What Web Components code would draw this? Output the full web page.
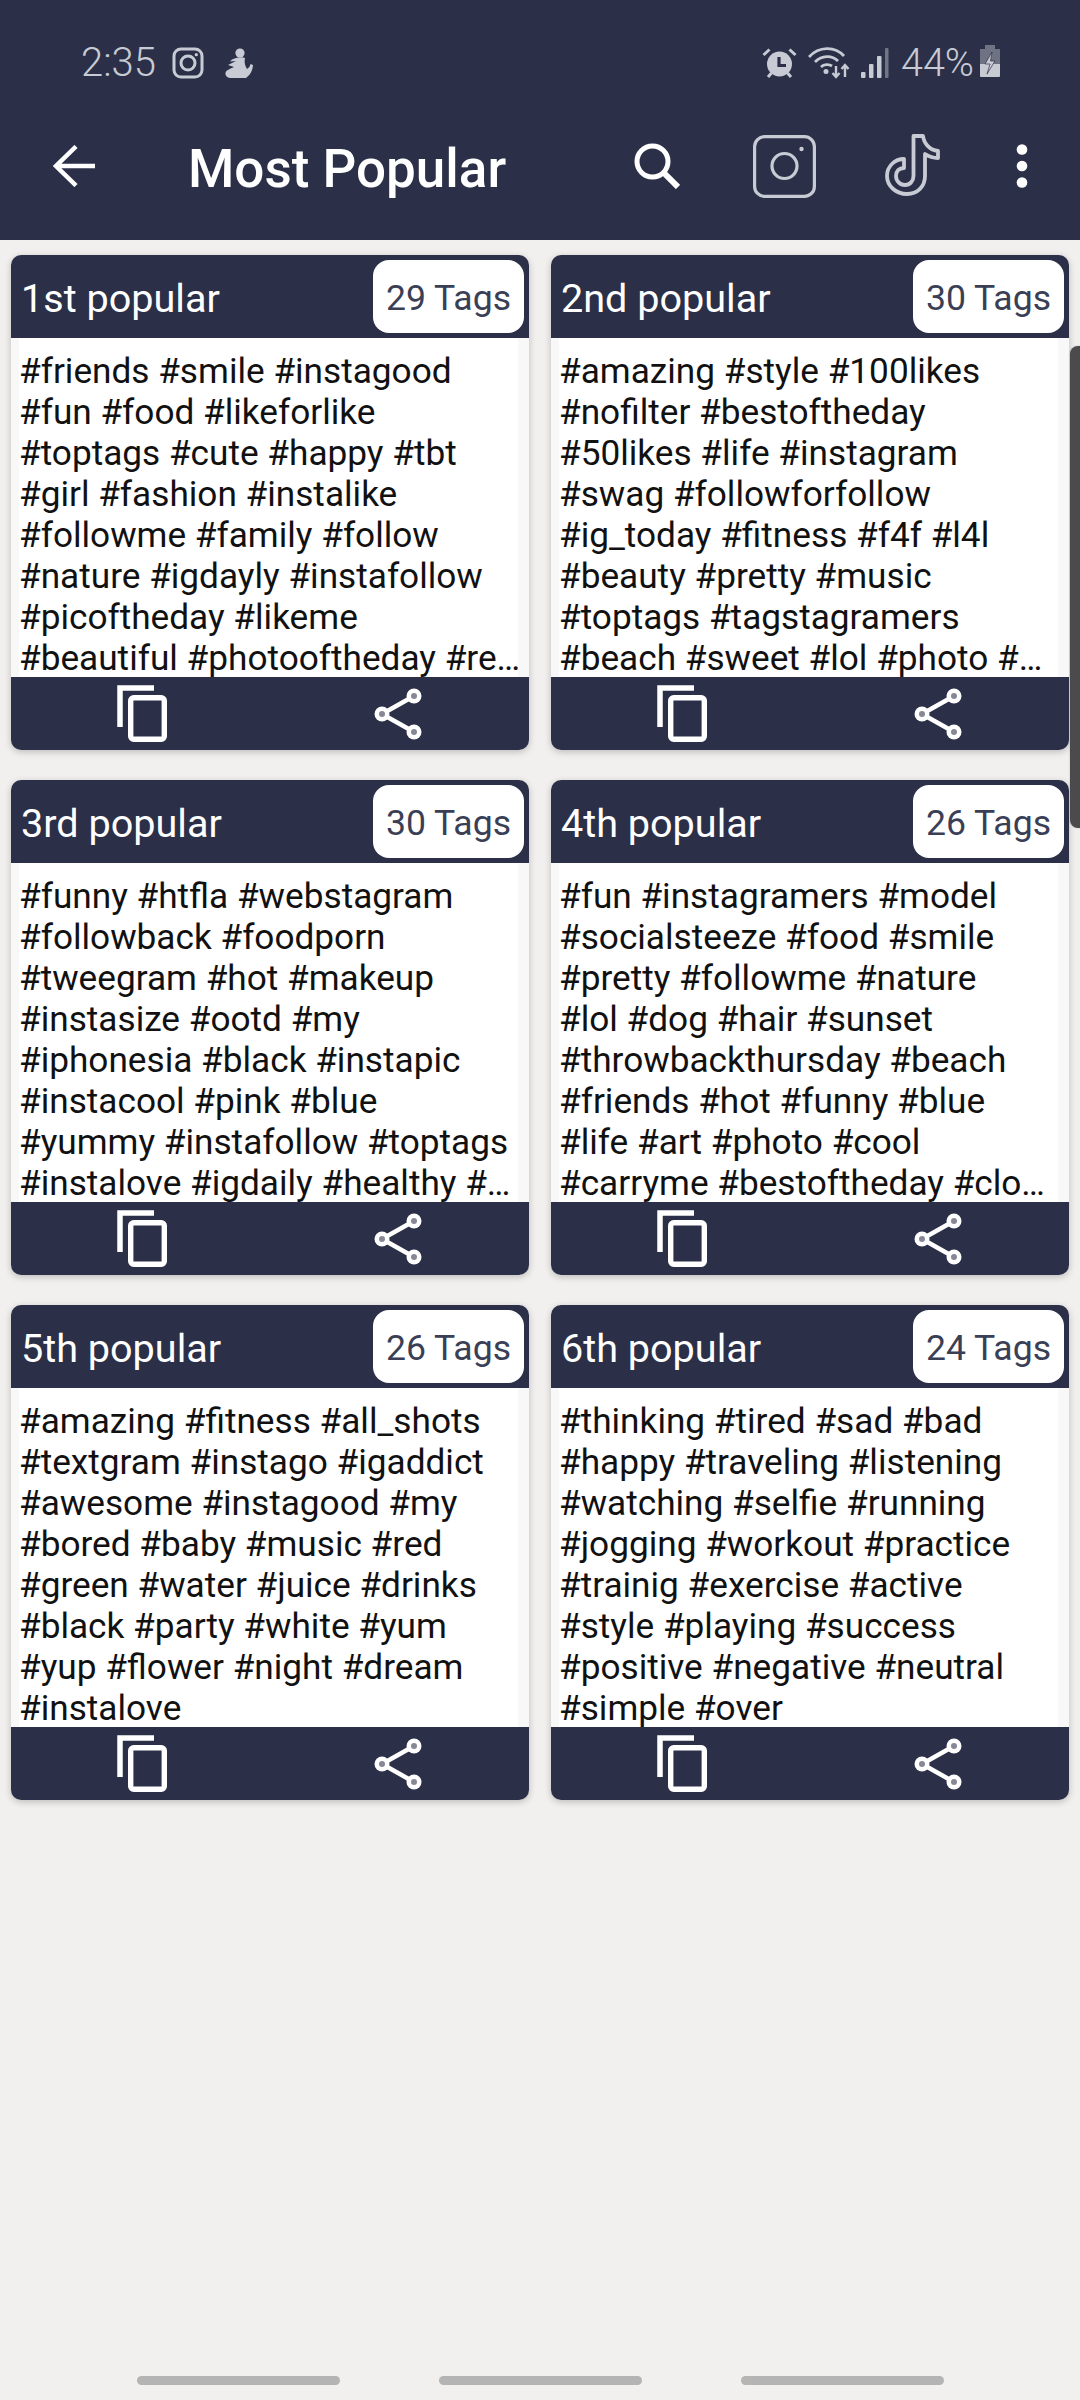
<!DOCTYPE html>
<html>
<head>
<meta charset="utf-8">
<title>Most Popular</title>
<style>
    html,body{margin:0;padding:0;background:#f1f0ef;}
    body{font-family:Roboto,"Liberation Sans",sans-serif;}
</style>
</head>
<body>
<tags-page>
    <status-bar slot="top"></status-bar>
    <app-bar slot="top" titulo="Most Popular"></app-bar>

    <tag-card titulo="1st popular" cuenta="29 Tags">
        #friends #smile #instagood #fun #food #likeforlike #toptags #cute #happy #tbt #girl #fashion #instalike #followme #family #follow #nature #igdayly #instafollow #picoftheday #likeme
        <span slot="ultima">#beautiful #photooftheday #remember #like4like</span>
    </tag-card>
    <tag-card titulo="2nd popular" cuenta="30 Tags">
        #amazing #style #100likes #nofilter #bestoftheday #50likes #life #instagram #swag #followforfollow #ig_today #fitness #f4f #l4l #beauty #pretty #music #toptags #tagstagramers
        <span slot="ultima">#beach #sweet #lol #photo #wow #love</span>
    </tag-card>
    <tag-card titulo="3rd popular" cuenta="30 Tags">
        #funny #htfla #webstagram #followback #foodporn #tweegram #hot #makeup #instasize #ootd #my #iphonesia #black #instapic #instacool #pink #blue #yummy #instafollow #toptags
        <span slot="ultima">#instalove #igdaily #healthy #wow #summer #girls</span>
    </tag-card>
    <tag-card titulo="4th popular" cuenta="26 Tags">
        #fun #instagramers #model #socialsteeze #food #smile #pretty #followme #nature<br>#lol #dog #hair #sunset #throwbackthursday #beach #friends #hot #funny #blue #life #art #photo #cool
        <span slot="ultima">#carryme #bestoftheday #clown #style #girl</span>
    </tag-card>
    <tag-card titulo="5th popular" cuenta="26 Tags">
        #amazing #fitness #all_shots #textgram #instago #igaddict #awesome #instagood #my #bored #baby #music #red #green #water #juice #drinks #black #party #white #yum #yup #flower #night #dream
        <span slot="ultima">#instalove</span>
    </tag-card>
    <tag-card titulo="6th popular" cuenta="24 Tags">
        #thinking #tired #sad #bad #happy #traveling #listening #watching #selfie #running #jogging #workout #practice #trainig #exercise #active #style #playing #success #positive #negative #neutral
        <span slot="ultima">#simple #over</span>
    </tag-card>

    <nav-bar slot="bottom"></nav-bar>
</tags-page>

<template id="tpl-page">
    <style>
        :host{display:flex;flex-direction:column;width:1080px;height:2400px;position:relative;overflow:hidden;background:#f1f0ef;}
        .grid{flex:1;display:grid;grid-template-columns:518px 518px;grid-auto-rows:495px;gap:30px 22px;padding:15px 11px;align-content:start;}
        .scroll{position:absolute;right:0;top:346px;width:10px;height:482px;background:#4b4b4d;border-radius:8px 0 0 8px;box-shadow:0 0 2px rgba(0,0,0,.25);}
    </style>
    <slot name="top"></slot>
    <div class="grid"><slot></slot></div>
    <slot name="bottom"></slot>
    <div class="scroll"></div>
</template>

<template id="tpl-status">
    <style>
        :host{display:flex;align-items:flex-start;height:92px;box-sizing:border-box;padding:46px 79px 0 81px;background:#2b3048;color:#c8cbd4;font-size:40px;font-weight:300;line-height:34px;}
        svg{display:block;flex:none;}
        .hora{width:74px;}
        .pct{width:72px;margin-left:12px;font-size:39.5px;}
        .sp{flex:1;}
    </style>
    <span class="hora">2:35</span>
    <svg style="margin:1px 0 0 17px" width="32" height="32" viewBox="0 0 32 32" fill="none" stroke="#c8cbd4" stroke-width="3"><rect x="2" y="2" width="28" height="28" rx="7"/><circle cx="16" cy="16" r="7"/><circle cx="24.3" cy="7.7" r="1.6" fill="#c8cbd4" stroke="none"/></svg>
    <svg style="margin:2px 0 0 21px" width="28" height="30" viewBox="0 0 28 30" fill="#c8cbd4"><circle cx="15" cy="5" r="4.6"/><path d="M11 10 C14 9 18 9 20 10 C19 14 20 18 22 21 C24 20 25 18 25.500 16 L28 17 C27.500 23 25 27 21 30 L6 30 C3 30 0 28 .5 25 C1 22 5 21 9 19 L3 17 L11 13 L5 13.500 L7 11.500 Z"/></svg>
    <span class="sp"></span>
    <svg width="35" height="33" viewBox="0 0 35 33" fill="#c8cbd4" stroke="#c8cbd4"><circle cx="17.5" cy="18" r="12.5" stroke="none"/><path d="M1.500 9 L7.500 3.500 M33.500 9 L27.500 3.500 M6 31 L9.500 27 M29 31 L25.500 27" stroke-width="3" fill="none"/><path d="M17 11 V19.500 H24" stroke="#2b3048" stroke-width="3.200" fill="none"/></svg>
    <svg style="margin-left:11px" width="43" height="33" viewBox="0 0 43 33" fill="none" stroke="#c8cbd4" stroke-width="2.800"><path d="M1 11 C11 0 27 0 36 10 M7 16 C14 9 24 9 30 15 M13 21 C16 18 21 18 24 20"/><circle cx="18" cy="25.500" r="2.500" fill="#c8cbd4" stroke="none"/><path d="M28 20 V31 M24.500 27 L28 31 L31.500 27 M37 31 V19 M33.500 23 L37 19 L40.500 23" stroke-width="2.400"/></svg>
    <svg style="margin-left:10px" width="28" height="33" viewBox="0 0 28 33" fill="#c8cbd4"><rect x="0" y="26" width="4.500" height="6" rx="1"/><rect x="8" y="18" width="4.500" height="14" rx="1"/><rect x="16" y="10" width="4.500" height="22" rx="1"/><rect x="24" y="2" width="3.500" height="30" rx="1" opacity=".45"/></svg>
    <span class="pct">44%</span>
    <svg style="margin:-1px 0 0 6px" width="22" height="33" viewBox="0 0 22 33"><rect x="6" y="0" width="10" height="5" fill="#6f7283"/><path d="M1 4 H21 V19 H1 Z" fill="#6f7283"/><path d="M1 19 H21 V31 Q21 32 20 32 H2 Q1 32 1 31 Z" fill="#c8cbd4"/><path d="M13 7 L6 19 H11 L8 29 L16 16 H11.500 Z" fill="#c8cbd4" stroke="#1d2030" stroke-width=".6"/></svg>
</template>

<template id="tpl-appbar">
    <style>
        :host{display:flex;align-items:center;height:148px;box-sizing:border-box;padding:0 0 0 53px;background:#2b3048;color:#fff;}
        svg{display:block;flex:none;}
        .titulo{width:443px;margin-left:93px;font-size:53px;font-weight:500;line-height:60px;white-space:nowrap;padding-top:5px;}
    </style>
    <svg width="42" height="42" viewBox="0 0 42 42" fill="none" stroke="#fff" stroke-width="4.500"><path d="M42 21 H3 M23 1.500 L3 21 L23 40.500"/></svg>
    <span class="titulo"></span>
    <svg style="margin-left:3px" width="46" height="46" viewBox="0 0 46 46" fill="none" stroke="#fff" stroke-width="5"><circle cx="18.500" cy="18.500" r="15.500"/><path d="M29 29 L44 44" stroke-width="6"/></svg>
    <svg style="margin-left:73px" width="63" height="63" viewBox="0 0 63 63" fill="none" stroke="#c8cbd4" stroke-width="3.200"><rect x="1.600" y="1.600" width="59.800" height="59.800" rx="10"/><circle cx="31.500" cy="31" r="12.500"/><circle cx="48.500" cy="14" r="2.200" fill="#c8cbd4" stroke="none"/></svg>
    <svg style="margin:0 0 0 54px" width="80" height="80" viewBox="0 0 80 80" fill="none" stroke="#c8cbd4" stroke-width="3.800" stroke-linejoin="round"><path d="M43.500 10 H53 C54 18 60 24 68 25 V32 C63 32 58 30 55 28 V50 C55 61 47 68 37 68 C26 68 17 60 17 50 C17 40 25 33 34 33 V42 C29 42 26 45 26 50 C26 55 30 59 35 59 C40 59 43.500 55 43.500 50 Z"/></svg>
    <svg style="margin-left:66px" width="12" height="44" viewBox="0 0 12 44" fill="#fff"><circle cx="6" cy="5.500" r="5.300"/><circle cx="6" cy="22" r="5.300"/><circle cx="6" cy="38.500" r="5.300"/></svg>
</template>

<template id="tpl-card">
    <style>
        :host{display:flex;flex-direction:column;height:495px;border-radius:10px;overflow:hidden;background:#f8f8f8;box-shadow:0 2px 7px rgba(0,0,0,.22);}
        .cab{display:flex;justify-content:space-between;height:83px;box-sizing:border-box;padding:5px 5px 5px 10px;background:#2b3048;color:#fff;font-size:39.6px;line-height:77px;}
        .cuenta{width:151px;height:73px;background:#fff;color:#3a3f56;border-radius:16px;text-align:center;font-size:35.6px;line-height:76px;}
        .cuerpo{height:339px;box-sizing:border-box;margin:0 11px 0 8px;padding:13px 0 0 0;background:#fff;color:#111;font-size:35.2px;line-height:41px;overflow:hidden;}
        .ultima{white-space:nowrap;overflow:hidden;text-overflow:ellipsis;height:48px;margin-right:-9px;}
        .pie{flex:1;display:flex;align-items:center;background:#2b3048;position:relative;}
        .pie svg{display:block;flex:none;}
    </style>
    <div class="cab"><span class="titulo"></span><span class="cuenta"></span></div>
    <div class="cuerpo">
        <div><slot></slot></div>
        <div class="ultima"><slot name="ultima"></slot></div>
    </div>
    <div class="pie">
        <svg style="margin-left:106px" width="50" height="57" viewBox="0 0 50 57" fill="none" stroke="#fff"><path d="M3 42 V3 H37" stroke-width="5.500"/><rect x="13.700" y="12.700" width="33.600" height="41.600" rx="3" stroke-width="5.400"/></svg>
        <svg style="margin-left:207px" width="48" height="54" viewBox="0 0 48 54" fill="#fff"><path d="M40 9 L8 27 L40 45" fill="none" stroke="#fff" stroke-width="4.500"/><circle cx="40" cy="9" r="7.500"/><circle cx="8" cy="27" r="7.500"/><circle cx="40" cy="45" r="7.500"/><g fill="#868896"><circle cx="40" cy="9" r="3"/><circle cx="8" cy="27" r="3"/><circle cx="40" cy="45" r="3"/></g></svg>
    </div>
</template>

<template id="tpl-nav">
    <style>
        :host{display:flex;justify-content:center;gap:99px;padding-bottom:15px;}
        i{display:block;width:203px;height:9px;border-radius:5px;background:#b4b4b4;}
    </style>
    <i></i><i></i><i></i>
</template>

<script>
function usarPlantilla(el,id){
    el.attachShadow({mode:"open"})
    el.shadowRoot.appendChild(document.getElementById(id).content.cloneNode(true))
}

class TagsPage extends HTMLElement{
    constructor(){
        super()
        usarPlantilla(this,"tpl-page")
    }
}
customElements.define("tags-page",TagsPage)

class StatusBar extends HTMLElement{
    constructor(){
        super()
        usarPlantilla(this,"tpl-status")
    }
}
customElements.define("status-bar",StatusBar)

class AppBar extends HTMLElement{
    constructor(){
        super()
        usarPlantilla(this,"tpl-appbar")
    }
    connectedCallback(){
        this.shadowRoot.querySelector(".titulo").textContent = this.getAttribute("titulo")
    }
}
customElements.define("app-bar",AppBar)

class TagCard extends HTMLElement{
    constructor(){
        super()
        usarPlantilla(this,"tpl-card")
    }
    connectedCallback(){
        this.shadowRoot.querySelector(".titulo").textContent = this.getAttribute("titulo")
        this.shadowRoot.querySelector(".cuenta").textContent = this.getAttribute("cuenta")
    }
}
customElements.define("tag-card",TagCard)

class NavBar extends HTMLElement{
    constructor(){
        super()
        usarPlantilla(this,"tpl-nav")
    }
}
customElements.define("nav-bar",NavBar)
</script>
</body>
</html>
